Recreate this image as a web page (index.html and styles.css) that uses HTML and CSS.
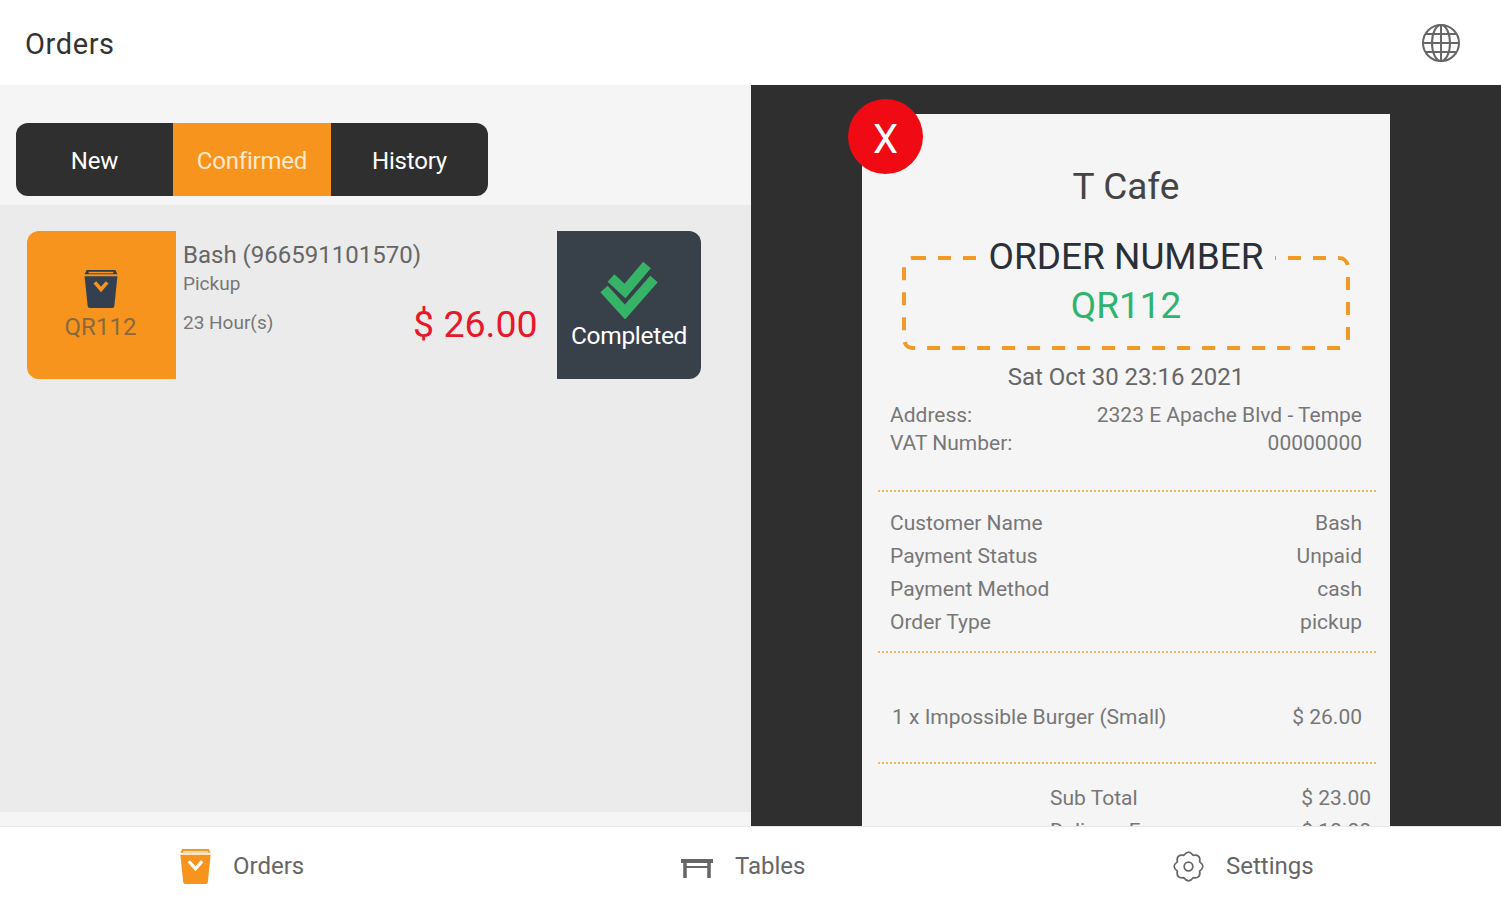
FILE: index.html
```html
<!DOCTYPE html>
<html lang="en">
<head>
<meta charset="utf-8">
<title>Orders</title>
<link rel="stylesheet" href="styles.css">
</head>
<body>
<div class="app">
  <header class="topbar">
    <h1 class="title">Orders</h1>
    <svg class="globe" viewBox="0 0 40 40" fill="none" stroke="#666" stroke-width="2">
      <circle cx="20" cy="20" r="18"/>
      <ellipse cx="20" cy="20" rx="9" ry="18"/>
      <path d="M20 2v36M2 20h36M5 11h30M5 29h30"/>
    </svg>
  </header>
  <main class="content">
    <section class="orders">
      <div class="tabs-wrap">
        <div class="tabs">
          <div class="tab">New</div>
          <div class="tab tab-active">Confirmed</div>
          <div class="tab">History</div>
        </div>
      </div>
      <div class="list">
        <article class="card">
          <div class="card-id">
            <svg class="bag" viewBox="0 0 34 38">
              <path d="M1 5 3 1h28l2 4z" fill="#34404f"/>
              <path d="M1 7h32l-3 29q-.2 2-2 2H6q-1.800 0-2-2z" fill="#34404f"/>
              <path d="M5 3.500h24" stroke="#f7941d" stroke-width="1.500"/>
              <path d="M11 13l6 7 6-7" fill="none" stroke="#f7941d" stroke-width="3.500"/>
            </svg>
            <span class="card-code">QR112</span>
          </div>
          <div class="card-info">
            <div class="card-name">Bash (966591101570)</div>
            <div class="card-sub">Pickup</div>
            <div class="card-time">23 Hour(s)</div>
          </div>
          <div class="card-price">$ 26.00</div>
          <div class="card-action">
            <svg class="checks" viewBox="0 0 60 58" fill="none" stroke="#37b368" stroke-width="10">
              <path d="M12 17l14 13L48 4"/>
              <path d="M5 28l21 23L55 18"/>
            </svg>
            <span>Completed</span>
          </div>
        </article>
      </div>
      <div class="strip"></div>
    </section>
    <section class="preview">
      <div class="receipt-wrap">
        <div class="close">X</div>
        <div class="receipt">
          <div class="shop">T Cafe</div>
          <div class="number-box">
            <svg class="number-frame" viewBox="0 0 448 94" fill="none" stroke="#f39a26" stroke-width="4">
              <rect x="2" y="2" width="444" height="90" rx="9" stroke-dasharray="13 12"/>
            </svg>
            <div class="number-label">ORDER NUMBER</div>
            <div class="number">QR112</div>
          </div>
          <div class="date">Sat Oct 30 23:16 2021</div>
          <div class="rows rows-address">
            <div class="row"><span>Address:</span><span>2323 E Apache Blvd - Tempe</span></div>
            <div class="row"><span>VAT Number:</span><span>00000000</span></div>
          </div>
          <div class="rule rule-a"></div>
          <div class="rows rows-meta">
            <div class="row"><span>Customer Name</span><span>Bash</span></div>
            <div class="row"><span>Payment Status</span><span>Unpaid</span></div>
            <div class="row"><span>Payment Method</span><span>cash</span></div>
            <div class="row"><span>Order Type</span><span>pickup</span></div>
          </div>
          <div class="rule rule-b"></div>
          <div class="rows rows-item">
            <div class="row"><span>1 x Impossible Burger (Small)</span><span>$ 26.00</span></div>
          </div>
          <div class="rule rule-c"></div>
          <div class="rows rows-total">
            <div class="row"><span>Sub Total</span><span>$ 23.00</span></div>
            <div class="row"><span>Delivery Fee</span><span>$ 10.00</span></div>
          </div>
        </div>
      </div>
    </section>
  </main>
  <nav class="bottom">
    <div class="nav-item nav-orders">
      <svg class="nav-icon" viewBox="0 0 34 38">
        <path d="M1 5 3 1h28l2 4z" fill="#f7941d"/>
        <path d="M1 7h32l-3 29q-.2 2-2 2H6q-1.800 0-2-2z" fill="#f7941d"/>
        <path d="M4 4.500h26" stroke="#fbd9a8" stroke-width="3"/>
        <path d="M10 14l7 8 7-8" fill="none" stroke="#fff" stroke-width="3.500"/>
      </svg>
      <span>Orders</span>
    </div>
    <div class="nav-item nav-tables">
      <svg class="nav-icon-table" viewBox="0 0 32 20" fill="none" stroke="#666">
        <path d="M0 3h32" stroke-width="4"/>
        <path d="M4 3v17M28 3v17" stroke-width="3.500"/>
        <path d="M4 9h24" stroke-width="2"/>
      </svg>
      <span>Tables</span>
    </div>
    <div class="nav-item nav-settings">
      <svg class="nav-icon-gear" viewBox="-1 -1 26 26" fill="none" stroke="#666" stroke-width="1.300" stroke-linejoin="round">
        <circle cx="12" cy="12" r="3.200"/>
        <path d="M20.310 8.560Q25 12 20.310 15.440Q21.190 21.190 15.440 20.310Q12 25 8.560 20.310Q2.810 21.190 3.690 15.440Q-1 12 3.690 8.560Q2.810 2.810 8.560 3.690Q12 -1 15.440 3.690Q21.190 2.810 20.310 8.560z"/>
      </svg>
      <span>Settings</span>
    </div>
  </nav>
</div>
</body>
</html>
```
FILE: styles.css
```css
* { box-sizing: border-box; }
html, body { margin: 0; height: 100%; overflow: hidden; }
body { font-family: Roboto, "Liberation Sans", sans-serif; background: #fff; color: #555; }
.app { display: grid; grid-template-rows: 85px 741px 74px; height: 900px; width: 1501px; }

.topbar { display: flex; align-items: center; justify-content: space-between; padding: 0 40px 0 25px; background: #fff; }
.title { margin: 0; font-size: 29px; font-weight: 400; color: #333; letter-spacing: .6px; position: relative; top: 1px; }
.globe { width: 40px; height: 40px; margin-top: 1px; }

.content { display: grid; grid-template-columns: 751px 750px; min-height: 0; }
.orders { display: grid; grid-template-rows: 120px 1fr 14px; background: #f5f5f5; }
.tabs-wrap { padding: 38px 0 0 16px; }
.tabs { display: grid; grid-template-columns: 157px 158px 157px; width: 472px; height: 73px; border-radius: 12px; overflow: hidden; background: #2f2f2f; }
.tab { display: flex; align-items: center; justify-content: center; color: #fff; font-size: 24px; letter-spacing: -.2px; padding-top: 2px; }
.tab-active { background: #f7941d; color: #ffe9cc; }
.list { background: #ebebeb; padding: 26px 50px 0 27px; }
.card { display: flex; height: 148px; }
.card-id { width: 149px; background: #f7941d; border-radius: 12px 0 0 12px; display: flex; flex-direction: column; align-items: center; padding-top: 38px; }
.bag { width: 36px; height: 39px; margin-left: -2px; }
.card-code { margin-top: 4px; font-size: 24px; color: #8a6a3c; line-height: 30px; margin-left: -2px; }
.card-info { width: 237px; padding: 8px 0 0 7px; }
.card-name { font-size: 24px; line-height: 32px; color: #666; white-space: nowrap; }
.card-sub { font-size: 19px; line-height: 26px; color: #777; margin-top: 0; }
.card-time { font-size: 19px; line-height: 26px; color: #777; margin-top: 13px; }
.card-price { width: 123px; text-align: right; padding-top: 70px; font-size: 37.500px; line-height: 46px; color: #e8182a; white-space: nowrap; }
.card-action { margin-left: 21px; width: 144px; background: #384049; border-radius: 0 12px 12px 0; display: flex; flex-direction: column; align-items: center; padding-top: 30px; color: #fff; font-size: 24.500px; letter-spacing: -.3px; }
.checks { width: 60px; height: 58px; }
.card-action span { margin-top: 1px; line-height: 32px; }

.preview { background: #2f2f2f; padding: 29px 111px 0; overflow: hidden; min-height: 0; }
.receipt-wrap { position: relative; height: 100%; }
.close { position: absolute; left: -14px; top: -15px; width: 75px; height: 75px; padding-top: 5px; border-radius: 50%; background: #f00a14; color: #fff; font-size: 40px; display: flex; align-items: center; justify-content: center; z-index: 1; }
.receipt { height: 100%; background: #f5f5f5; overflow: hidden; color: #666; }
.shop { text-align: center; font-size: 37px; line-height: 44px; color: #444; padding-top: 52px; height: 96px; margin-top: -1px; }
.number-box { position: relative; margin: 47px 40px 0; height: 94px; text-align: center; }
.number-frame { position: absolute; inset: 0; width: 100%; height: 100%; }
.number-label { position: relative; width: fit-content; margin: 0 auto; top: -21px; padding: 0 11px; font-size: 37px; line-height: 44px; color: #2a2f38; background: #f5f5f5; }
.number { position: relative; font-size: 37px; line-height: 44px; color: #2fb36f; margin-top: -16px; }
.date { text-align: center; font-size: 24px; line-height: 30px; color: #666; margin-top: 12px; }
.rows { padding: 0 28px; font-size: 21px; color: #777; }
.row { display: flex; justify-content: space-between; white-space: nowrap; }
.rows-address { margin-top: 9px; }
.rows-address .row { line-height: 28px; }
.rule { margin: 0 14px 0 16px; border-top: 2px dotted #f5b45e; }
.rule-a { margin-top: 33px; }
.rows-meta { margin-top: 15px; }
.rows-meta .row { line-height: 33px; }
.rule-b { margin-top: 12px; }
.rows-item { margin-top: 48px; padding-left: 30px; }
.rows-item .row { line-height: 33px; }
.rule-c { margin-top: 28px; }
.rows-total { margin-top: 18px; padding: 0 19px 0 188px; }
.rows-total .row { line-height: 33px; }

.bottom { position: relative; background: #fff; border-top: 1px solid #e6e6e6; z-index: 2; }
.nav-item { position: absolute; top: 0; height: 78px; display: flex; align-items: center; font-size: 24px; color: #666; }
.nav-orders { left: 179px; gap: 21px; }
.nav-tables { left: 681px; gap: 22px; }
.nav-settings { left: 1171px; gap: 20px; }
.nav-icon { width: 33px; height: 36px; }
.nav-icon-table { width: 32px; height: 20px; margin-top: 4px; }
.nav-icon-gear { width: 35px; height: 35px; }
```
